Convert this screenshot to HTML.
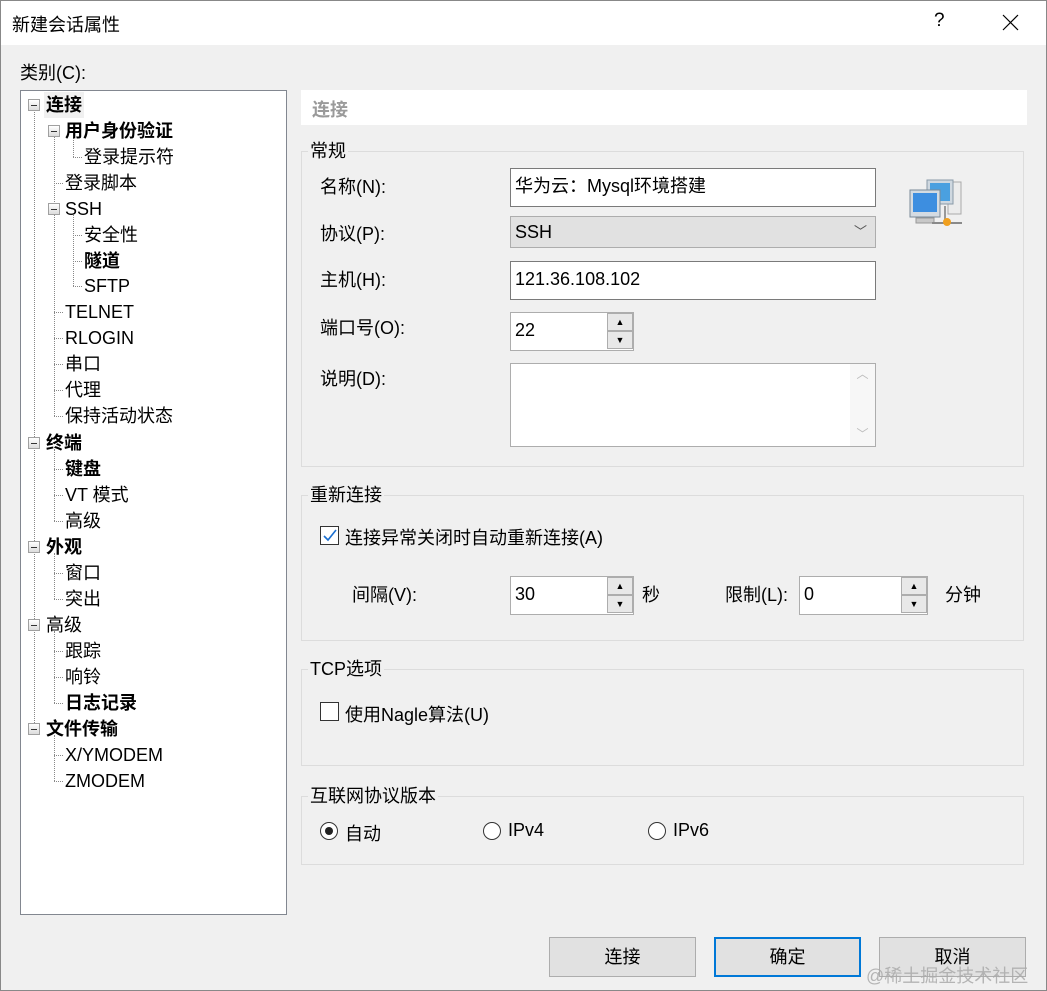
<!DOCTYPE html>
<html><head><meta charset="utf-8"><style>
*{margin:0;padding:0;box-sizing:border-box}
body{width:1047px;height:991px;background:#f0f0f0;font-family:"Liberation Sans","Noto Sans CJK SC",sans-serif;font-size:18px;color:#000;position:relative;overflow:hidden}
.a{position:absolute;white-space:nowrap}
.t{position:absolute;line-height:26px;height:26px;white-space:nowrap}
.b{font-weight:bold}
.ex{position:absolute;width:12px;height:12px;border:1px solid #a0a0a0;background:linear-gradient(#fff,#dcdcdc)}
.ex:after{content:"";position:absolute;left:2px;top:4.5px;width:6px;height:1px;background:#333}
.vl{position:absolute;border-left:1px dotted #888;width:0}
.hl{position:absolute;border-top:1px dotted #888;height:0}
.grp{position:absolute;border:1px solid #dcdcdc}
.gl{position:absolute;background:#f0f0f0;padding:0 2px;line-height:22px}
.in{position:absolute;background:#fff;border:1px solid #7a7a7a;padding-left:4px;line-height:34px}
.sp{position:absolute;width:26px;height:18px;border:1px solid #adadad;background:#e8e8e8;font-size:9px;text-align:center;line-height:16px}
.btn{position:absolute;background:#e1e1e1;border:1px solid #adadad;text-align:center;line-height:38px;height:40px;width:147px;top:937px}
.rd{position:absolute;width:18px;height:18px;border:1px solid #333;border-radius:50%;background:#fff}
</style></head><body>
<div class="a" style="left:0;top:0;width:1047px;height:45px;background:#fff"></div>
<div class="a" style="left:12px;top:11px">新建会话属性</div>
<div class="a" style="left:934px;top:10px;font-size:19px">?</div>
<svg class="a" style="left:1002px;top:14px" width="17" height="17"><path d="M1 1L16 16M16 1L1 16" stroke="#000" stroke-width="1.2"/></svg>
<div class="a" style="left:0;top:0;width:1047px;height:991px;border:1px solid #888;pointer-events:none"></div>
<div class="a" style="left:20px;top:59px">类别(C):</div>

<div class="a" style="left:20px;top:90px;width:267px;height:825px;background:#fff;border:1px solid #828790"></div>
<div class="vl" style="left:34px;top:112px;height:617px"></div>
<div class="vl" style="left:54px;top:137px;height:279px"></div>
<div class="vl" style="left:73px;top:137px;height:20px"></div>
<div class="vl" style="left:73px;top:215px;height:71px"></div>
<div class="vl" style="left:54px;top:449px;height:72px"></div>
<div class="vl" style="left:54px;top:553px;height:46px"></div>
<div class="vl" style="left:54px;top:631px;height:72px"></div>
<div class="vl" style="left:54px;top:735px;height:46px"></div>
<div class="hl" style="left:73px;top:157px;width:9px"></div>
<div class="hl" style="left:54px;top:183px;width:9px"></div>
<div class="hl" style="left:73px;top:235px;width:9px"></div>
<div class="hl" style="left:73px;top:261px;width:9px"></div>
<div class="hl" style="left:73px;top:286px;width:9px"></div>
<div class="hl" style="left:54px;top:312px;width:9px"></div>
<div class="hl" style="left:54px;top:338px;width:9px"></div>
<div class="hl" style="left:54px;top:364px;width:9px"></div>
<div class="hl" style="left:54px;top:390px;width:9px"></div>
<div class="hl" style="left:54px;top:416px;width:9px"></div>
<div class="hl" style="left:54px;top:469px;width:9px"></div>
<div class="hl" style="left:54px;top:495px;width:9px"></div>
<div class="hl" style="left:54px;top:521px;width:9px"></div>
<div class="hl" style="left:54px;top:573px;width:9px"></div>
<div class="hl" style="left:54px;top:599px;width:9px"></div>
<div class="hl" style="left:54px;top:651px;width:9px"></div>
<div class="hl" style="left:54px;top:677px;width:9px"></div>
<div class="hl" style="left:54px;top:703px;width:9px"></div>
<div class="hl" style="left:54px;top:755px;width:9px"></div>
<div class="hl" style="left:54px;top:781px;width:9px"></div>
<div class="ex" style="left:28px;top:99px"></div>
<div class="ex" style="left:48px;top:125px"></div>
<div class="ex" style="left:48px;top:203px"></div>
<div class="ex" style="left:28px;top:437px"></div>
<div class="ex" style="left:28px;top:541px"></div>
<div class="ex" style="left:28px;top:619px"></div>
<div class="ex" style="left:28px;top:723px"></div>
<div class="t b" style="left:44px;top:92px;padding:0 2px;background:#f0f0f0">连接</div>
<div class="t b" style="left:65px;top:118px">用户身份验证</div>
<div class="t" style="left:84px;top:144px">登录提示符</div>
<div class="t" style="left:65px;top:170px">登录脚本</div>
<div class="t" style="left:65px;top:196px">SSH</div>
<div class="t" style="left:84px;top:222px">安全性</div>
<div class="t b" style="left:84px;top:248px">隧道</div>
<div class="t" style="left:84px;top:273px">SFTP</div>
<div class="t" style="left:65px;top:299px">TELNET</div>
<div class="t" style="left:65px;top:325px">RLOGIN</div>
<div class="t" style="left:65px;top:351px">串口</div>
<div class="t" style="left:65px;top:377px">代理</div>
<div class="t" style="left:65px;top:403px">保持活动状态</div>
<div class="t b" style="left:46px;top:430px">终端</div>
<div class="t b" style="left:65px;top:456px">键盘</div>
<div class="t" style="left:65px;top:482px">VT 模式</div>
<div class="t" style="left:65px;top:508px">高级</div>
<div class="t b" style="left:46px;top:534px">外观</div>
<div class="t" style="left:65px;top:560px">窗口</div>
<div class="t" style="left:65px;top:586px">突出</div>
<div class="t" style="left:46px;top:612px">高级</div>
<div class="t" style="left:65px;top:638px">跟踪</div>
<div class="t" style="left:65px;top:664px">响铃</div>
<div class="t b" style="left:65px;top:690px">日志记录</div>
<div class="t b" style="left:46px;top:716px">文件传输</div>
<div class="t" style="left:65px;top:742px">X/YMODEM</div>
<div class="t" style="left:65px;top:768px">ZMODEM</div>

<div class="a" style="left:301px;top:90px;width:726px;height:35px;background:#fff"></div>
<div class="a b" style="left:312px;top:96px;color:#9a9a9a">连接</div>

<div class="grp" style="left:301px;top:151px;width:723px;height:316px"></div>
<div class="gl" style="left:308px;top:140px">常规</div>
<div class="a" style="left:320px;top:173px">名称(N):</div>
<div class="a" style="left:320px;top:220px">协议(P):</div>
<div class="a" style="left:320px;top:266px">主机(H):</div>
<div class="a" style="left:320px;top:314px">端口号(O):</div>
<div class="a" style="left:320px;top:365px">说明(D):</div>
<div class="in" style="left:510px;top:168px;width:366px;height:39px">华为云：Mysql环境搭建</div>
<div class="in" style="left:510px;top:216px;width:366px;height:32px;background:#e1e1e1;border-color:#adadad;line-height:30px">SSH<span style="position:absolute;right:8px;top:0;font-size:13px;color:#555">﹀</span></div>
<div class="in" style="left:510px;top:261px;width:366px;height:39px">121.36.108.102</div>
<div class="in" style="left:510px;top:312px;width:124px;height:39px;border-color:#adadad">22</div>
<div class="sp" style="left:607px;top:313px">▲</div>
<div class="sp" style="left:607px;top:331px">▼</div>
<div class="in" style="left:510px;top:363px;width:366px;height:84px;border-color:#adadad"></div>
<div class="a" style="left:850px;top:364px;width:25px;height:82px;background:#f7f7f7;color:#bbb;font-size:12px;text-align:center;line-height:20px">︿<br><br><br>﹀</div>
<svg class="a" style="left:908px;top:178px" width="56" height="52" viewBox="0 0 56 52">
<rect x="40" y="4" width="13" height="32" fill="#ececec" stroke="#aaa"/>
<rect x="19" y="2" width="26" height="24" fill="#cfd8e0" stroke="#8a9aa8"/><rect x="22" y="5" width="20" height="18" fill="#4aa0e0"/>
<rect x="2" y="12" width="30" height="27" fill="#d4dbe2" stroke="#7a8a98"/><rect x="5" y="15" width="24" height="19" fill="#3d8ee0"/>
<rect x="8" y="40" width="18" height="5" fill="#c8c8c8" stroke="#999"/>
<line x1="24" y1="45" x2="54" y2="45" stroke="#8a8a8a" stroke-width="2"/>
<line x1="37" y1="28" x2="37" y2="44" stroke="#999" stroke-width="2"/>
<circle cx="39" cy="44" r="4" fill="#f0a020"/></svg>

<div class="grp" style="left:301px;top:495px;width:723px;height:146px"></div>
<div class="gl" style="left:308px;top:484px">重新连接</div>
<div class="a" style="left:320px;top:526px;width:19px;height:19px;border:1px solid #333;background:#fff"><svg width="17" height="17" style="position:absolute;left:0;top:0"><path d="M3 9 L7 13 L15 3" stroke="#1a6fd0" stroke-width="1.6" fill="none"/></svg></div>
<div class="a" style="left:345px;top:524px">连接异常关闭时自动重新连接(A)</div>
<div class="a" style="left:352px;top:581px">间隔(V):</div>
<div class="in" style="left:510px;top:576px;width:124px;height:39px;border-color:#adadad">30</div>
<div class="sp" style="left:607px;top:577px">▲</div>
<div class="sp" style="left:607px;top:595px">▼</div>
<div class="a" style="left:642px;top:581px">秒</div>
<div class="a" style="left:725px;top:581px">限制(L):</div>
<div class="in" style="left:799px;top:576px;width:129px;height:39px;border-color:#adadad">0</div>
<div class="sp" style="left:901px;top:577px">▲</div>
<div class="sp" style="left:901px;top:595px">▼</div>
<div class="a" style="left:945px;top:581px">分钟</div>

<div class="grp" style="left:301px;top:669px;width:723px;height:97px"></div>
<div class="gl" style="left:308px;top:658px">TCP选项</div>
<div class="a" style="left:320px;top:702px;width:19px;height:19px;border:1px solid #333;background:#fff"></div>
<div class="a" style="left:345px;top:701px">使用Nagle算法(U)</div>

<div class="grp" style="left:301px;top:796px;width:723px;height:69px"></div>
<div class="gl" style="left:308px;top:785px">互联网协议版本</div>
<div class="rd" style="left:320px;top:822px"><div style="position:absolute;left:4px;top:4px;width:8px;height:8px;border-radius:50%;background:#222"></div></div>
<div class="a" style="left:345px;top:820px">自动</div>
<div class="rd" style="left:483px;top:822px"></div>
<div class="a" style="left:508px;top:820px">IPv4</div>
<div class="rd" style="left:648px;top:822px"></div>
<div class="a" style="left:673px;top:820px">IPv6</div>

<div class="btn" style="left:549px">连接</div>
<div class="btn" style="left:714px;border:2px solid #0078d7;line-height:36px">确定</div>
<div class="btn" style="left:879px">取消</div>
<div class="a" style="left:866px;top:962px;color:#aaa;font-size:18px;opacity:.85">@稀土掘金技术社区</div>
</body></html>
